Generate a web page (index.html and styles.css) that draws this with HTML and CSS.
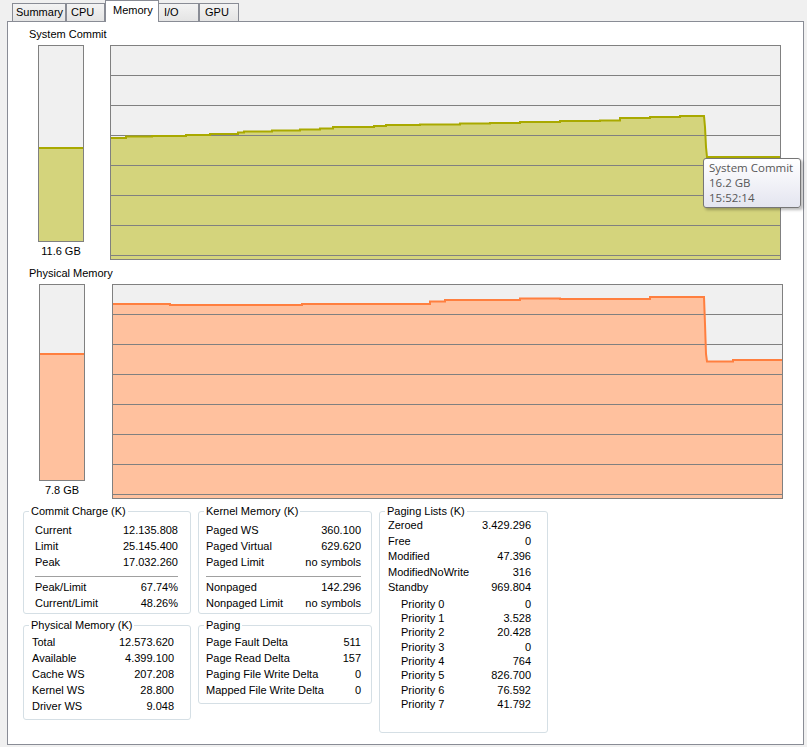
FILE: index.html
```html
<!DOCTYPE html>
<html>
<head>
<meta charset="utf-8">
<title>Memory</title>
<link rel="stylesheet" href="styles.css">
</head>
<body>
<div class="tabs">
  <div class="tab t-summary">Summary</div>
  <div class="tab t-cpu">CPU</div>
  <div class="tab tab-active t-mem">Memory</div>
  <div class="tab t-io">I/O</div>
  <div class="tab t-gpu">GPU</div>
</div>
<div class="panel">
  <section class="graph-sec sec-commit">
    <div class="sec-label">System Commit</div>
    <div class="sec-row">
      <div class="meter">
        <div class="bar"><div class="bar-fill fill-commit" style="height:48.26%"></div></div>
        <div class="bar-value">11.6 GB</div>
      </div>
      <svg class="chart" width="671" height="215" viewBox="0 0 671 215">
        <rect x="0" y="0" width="671" height="215" fill="#f0f0f0"/>
        <path d="M0,93 H16 V91.5 H42 V91 H76 V90 H100 V89 H128 V87.5 H134 V86.5 H162 V85.5 H190 V84.5 H210 V83.5 H223 V82 H264 V81 H276 V80 H310 V79.5 H350 V78.5 H380 V78 H410 V77 H450 V76 H490 V75.5 H510 V73 H540 V72 H570 V71 H594 L595,82 L596,102 L597,112 H671 V215 H0 Z" fill="#d4d47c"/>
        <g stroke="#808080" stroke-width="1" shape-rendering="crispEdges">
          <line x1="0" y1="30.5" x2="671" y2="30.5"/>
          <line x1="0" y1="60.5" x2="671" y2="60.5"/>
          <line x1="0" y1="90.5" x2="671" y2="90.5"/>
          <line x1="0" y1="120.5" x2="671" y2="120.5"/>
          <line x1="0" y1="150.5" x2="671" y2="150.5"/>
          <line x1="0" y1="180.5" x2="671" y2="180.5"/>
          <line x1="0" y1="210.5" x2="671" y2="210.5"/>
        </g>
        <path d="M0,93 H16 V91.5 H42 V91 H76 V90 H100 V89 H128 V87.5 H134 V86.5 H162 V85.5 H190 V84.5 H210 V83.5 H223 V82 H264 V81 H276 V80 H310 V79.5 H350 V78.5 H380 V78 H410 V77 H450 V76 H490 V75.5 H510 V73 H540 V72 H570 V71 H594 L595,82 L596,102 L597,112 H671" fill="none" stroke="#a9a900" stroke-width="2"/>
        <rect x="0.5" y="0.5" width="670" height="214" fill="none" stroke="#808080" shape-rendering="crispEdges"/>
      </svg>
    </div>
  </section>
  <section class="graph-sec sec-phys">
    <div class="sec-label">Physical Memory</div>
    <div class="sec-row">
      <div class="meter">
        <div class="bar"><div class="bar-fill fill-phys" style="height:65.01%"></div></div>
        <div class="bar-value">7.8 GB</div>
      </div>
      <svg class="chart" width="671" height="215" viewBox="0 0 671 215">
        <rect x="0" y="0" width="671" height="215" fill="#f0f0f0"/>
        <path d="M0,20 H58 V21 H190 V20 H318 V17.5 H333 V16 H408 V14.5 H448 V15 H538 V13 H592 L593,40 L594,70 L595,77.5 H621 V76 H671 V215 H0 Z" fill="#ffc19e"/>
        <g stroke="#808080" stroke-width="1" shape-rendering="crispEdges">
          <line x1="0" y1="30.5" x2="671" y2="30.5"/>
          <line x1="0" y1="60.5" x2="671" y2="60.5"/>
          <line x1="0" y1="90.5" x2="671" y2="90.5"/>
          <line x1="0" y1="120.5" x2="671" y2="120.5"/>
          <line x1="0" y1="150.5" x2="671" y2="150.5"/>
          <line x1="0" y1="180.5" x2="671" y2="180.5"/>
          <line x1="0" y1="210.5" x2="671" y2="210.5"/>
        </g>
        <path d="M0,20 H58 V21 H190 V20 H318 V17.5 H333 V16 H408 V14.5 H448 V15 H538 V13 H592 L593,40 L594,70 L595,77.5 H621 V76 H671" fill="none" stroke="#ff7f3f" stroke-width="2"/>
        <rect x="0.5" y="0.5" width="670" height="214" fill="none" stroke="#808080" shape-rendering="crispEdges"/>
      </svg>
    </div>
  </section>

  <div class="tooltip">
    <div>System Commit</div>
    <div>16.2 GB</div>
    <div>15:52:14</div>
  </div>

  <div class="groups">
    <div class="col col1">
      <fieldset class="grp g-commit">
        <legend>Commit Charge (K)</legend>
        <div class="rows">
          <div class="kv"><span>Current</span><span>12.135.808</span></div>
          <div class="kv"><span>Limit</span><span>25.145.400</span></div>
          <div class="kv"><span>Peak</span><span>17.032.260</span></div>
          <div class="sep"></div>
          <div class="kv"><span>Peak/Limit</span><span>67.74%</span></div>
          <div class="kv"><span>Current/Limit</span><span>48.26%</span></div>
        </div>
      </fieldset>
      <fieldset class="grp g-physk">
        <legend>Physical Memory (K)</legend>
        <div class="rows">
          <div class="kv"><span>Total</span><span>12.573.620</span></div>
          <div class="kv"><span>Available</span><span>4.399.100</span></div>
          <div class="kv"><span>Cache WS</span><span>207.208</span></div>
          <div class="kv"><span>Kernel WS</span><span>28.800</span></div>
          <div class="kv"><span>Driver WS</span><span>9.048</span></div>
        </div>
      </fieldset>
    </div>
    <div class="col col2">
      <fieldset class="grp g-kernel">
        <legend>Kernel Memory (K)</legend>
        <div class="rows">
          <div class="kv"><span>Paged WS</span><span>360.100</span></div>
          <div class="kv"><span>Paged Virtual</span><span>629.620</span></div>
          <div class="kv"><span>Paged Limit</span><span>no symbols</span></div>
          <div class="sep"></div>
          <div class="kv"><span>Nonpaged</span><span>142.296</span></div>
          <div class="kv"><span>Nonpaged Limit</span><span>no symbols</span></div>
        </div>
      </fieldset>
      <fieldset class="grp g-paging">
        <legend>Paging</legend>
        <div class="rows">
          <div class="kv"><span>Page Fault Delta</span><span>511</span></div>
          <div class="kv"><span>Page Read Delta</span><span>157</span></div>
          <div class="kv"><span>Paging File Write Delta</span><span>0</span></div>
          <div class="kv"><span>Mapped File Write Delta</span><span>0</span></div>
        </div>
      </fieldset>
    </div>
    <div class="col col3">
      <fieldset class="grp g-lists">
        <legend>Paging Lists (K)</legend>
        <div class="rows">
          <div class="kv lst"><span>Zeroed</span><span>3.429.296</span></div>
          <div class="kv lst"><span>Free</span><span>0</span></div>
          <div class="kv lst"><span>Modified</span><span>47.396</span></div>
          <div class="kv lst"><span>ModifiedNoWrite</span><span>316</span></div>
          <div class="kv lst"><span>Standby</span><span>969.804</span></div>
          <div class="pris">
            <div class="kv pri"><span>Priority 0</span><span>0</span></div>
            <div class="kv pri"><span>Priority 1</span><span>3.528</span></div>
            <div class="kv pri"><span>Priority 2</span><span>20.428</span></div>
            <div class="kv pri"><span>Priority 3</span><span>0</span></div>
            <div class="kv pri"><span>Priority 4</span><span>764</span></div>
            <div class="kv pri"><span>Priority 5</span><span>826.700</span></div>
            <div class="kv pri"><span>Priority 6</span><span>76.592</span></div>
            <div class="kv pri"><span>Priority 7</span><span>41.792</span></div>
          </div>
        </div>
      </fieldset>
    </div>
  </div>
</div>
</body>
</html>
```

FILE: styles.css
```css
* {
  box-sizing: border-box;
}

html, body {
  margin: 0;
  padding: 0;
}

body {
  width: 807px;
  height: 747px;
  overflow: hidden;
  background: #f0f0f0;
  font-family: "Liberation Sans", Arial, sans-serif;
  font-size: 11px;
  color: #000;
}

/* ---------- tabs ---------- */
.tabs {
  display: flex;
  align-items: flex-start;
  height: 22px;
  padding-left: 12px;
  position: relative;
  z-index: 2;
}

.tab {
  height: 18px;
  margin-top: 3px;
  border: 1px solid #898c95;
  border-bottom: none;
  background: linear-gradient(#f3f3f3, #e4e4e4);
  line-height: 17px;
  padding-left: 4px;
  white-space: nowrap;
}

.t-summary { width: 54px; padding-left: 3px; }
.t-cpu { width: 39px; margin-left: 0; padding-left: 4px; }
.t-io { width: 41px; margin-left: -1px; padding-left: 5px; }
.t-gpu { width: 40px; padding-left: 5px; }

.tab-active {
  position: relative;
  z-index: 3;
  width: 54px;
  height: 22px;
  margin-top: 0;
  background: #fff;
  padding-left: 7px;
  line-height: 18px;
}

/* ---------- panel ---------- */
.panel {
  position: relative;
  margin-left: 7px;
  margin-top: -1px;
  width: 797px;
  height: 724px;
  border: 1px solid #898c95;
  background: #fff;
}

.graph-sec {
  display: flex;
  flex-direction: column;
}

.sec-commit { padding-top: 6px; }
.sec-phys { padding-top: 7px; }

.sec-label {
  padding-left: 21px;
  line-height: 13px;
  height: 13px;
  white-space: nowrap;
}

.sec-row {
  display: flex;
  align-items: flex-start;
  margin-top: 4px;
  height: 215px;
}

.meter {
  width: 46px;
  display: flex;
  flex-direction: column;
  align-items: center;
}

.sec-commit .meter { margin-left: 30px; }
.sec-phys .meter { margin-left: 31px; }

.sec-commit .chart { margin-left: 26px; }
.sec-phys .chart { margin-left: 27px; }

.chart {
  display: block;
  flex: none;
}

.bar {
  width: 46px;
  height: 197px;
  border: 1px solid #808080;
  background: #f0f0f0;
  display: flex;
  flex-direction: column;
  justify-content: flex-end;
}

.bar-fill {
  width: 100%;
}

.fill-commit {
  background: #d4d47c;
  border-top: 2px solid #a9a900;
}

.fill-phys {
  background: #ffc19e;
  border-top: 2px solid #ff7f3f;
}

.bar-value {
  margin-top: 3px;
  line-height: 13px;
  white-space: nowrap;
  color: #000;
}

/* ---------- tooltip ---------- */
.tooltip {
  position: absolute;
  left: 695px;
  top: 136px;
  width: 98px;
  height: 50px;
  padding: 1px 4px 2px 5px;
  border: 1px solid #767676;
  border-radius: 3px;
  background: linear-gradient(#ffffff, #e4e5f0);
  box-shadow: 2px 2px 3px rgba(0, 0, 0, 0.28);
  font-family: "Open Sans", "Noto Sans", sans-serif;
  font-size: 11.5px;
  line-height: 15px;
  color: #575757;
  white-space: nowrap;
  z-index: 5;
}

/* ---------- groups ---------- */
.groups {
  display: flex;
  align-items: flex-start;
  gap: 7px;
  margin: 6px 0 0 15px;
}

.col {
  display: flex;
  flex-direction: column;
  gap: 5px;
}

.col1 { width: 168px; }
.col2 { width: 174px; }
.col3 { width: 169px; }

.grp {
  margin: 0;
  padding: 0;
  min-width: 0;
  width: 100%;
  border: 1px solid #d5dfe5;
  border-radius: 3px;
}

.grp legend {
  margin-left: 5px;
  padding: 0 2px;
  line-height: 13px;
  height: 13px;
  font-size: 11px;
}

.kv {
  display: flex;
  justify-content: space-between;
  height: 16px;
  line-height: 16px;
  white-space: nowrap;
}

.sep {
  height: 1px;
  background: #a0a0a0;
  margin: 6px 0 2px;
}

.g-commit .rows { padding: 4px 12px 2px 11px; }
.g-kernel .rows { padding: 4px 10px 2px 7px; }
.g-physk .rows { padding: 2px 16px 5px 8px; }
.g-paging .rows { padding: 2px 10px 5px 7px; }
.g-lists .rows { padding: 0 16px 20px 8px; }

.kv.lst {
  height: 15.5px;
  line-height: 15.5px;
}

.pris {
  margin-top: 1px;
}

.kv.pri {
  height: 14.4px;
  line-height: 14.4px;
  padding-left: 13px;
}
```
